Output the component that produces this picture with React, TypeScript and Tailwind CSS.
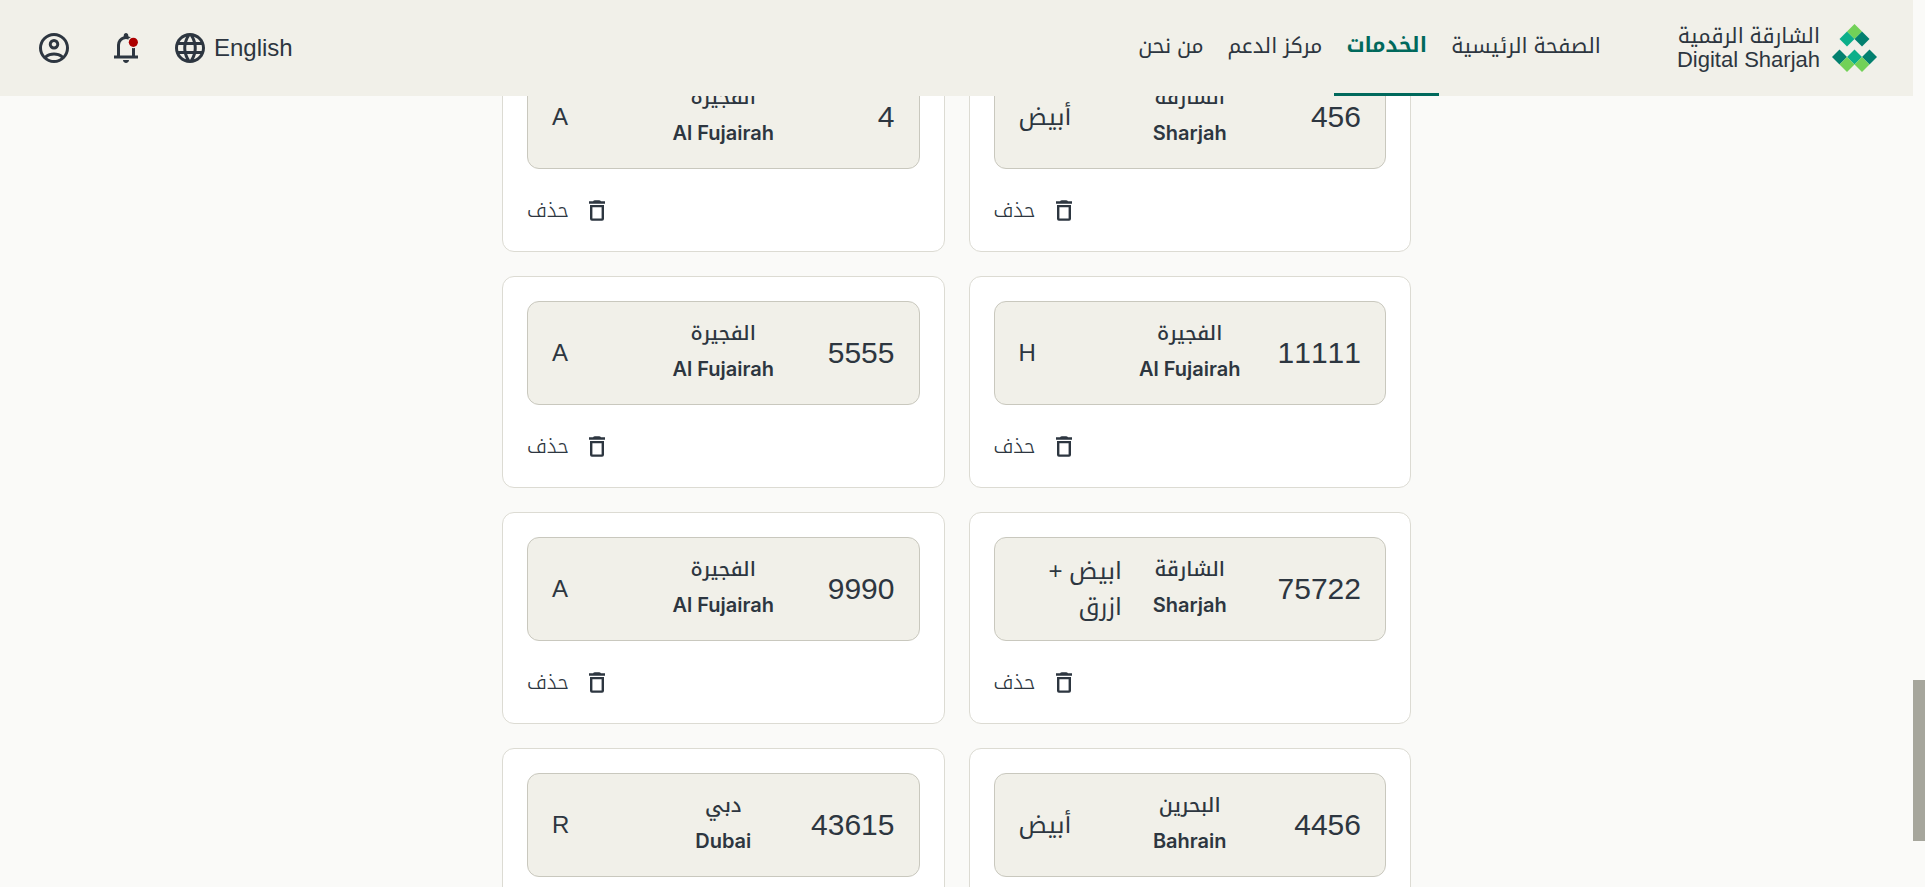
import type { ReactNode } from "react";

type Plate = {
  number: string;
  cityAr: string;
  cityEn: string;
  code: string;
};

const plates: Plate[] = [
  { number: "456", cityAr: "الشارقة", cityEn: "Sharjah", code: "أبيض" },
  { number: "4", cityAr: "الفجيرة", cityEn: "Al Fujairah", code: "A" },
  { number: "11111", cityAr: "الفجيرة", cityEn: "Al Fujairah", code: "H" },
  { number: "5555", cityAr: "الفجيرة", cityEn: "Al Fujairah", code: "A" },
  { number: "75722", cityAr: "الشارقة", cityEn: "Sharjah", code: "ابيض + ازرق" },
  { number: "9990", cityAr: "الفجيرة", cityEn: "Al Fujairah", code: "A" },
  { number: "4456", cityAr: "البحرين", cityEn: "Bahrain", code: "أبيض" },
  { number: "43615", cityAr: "دبي", cityEn: "Dubai", code: "R" },
];

const navItems = [
  { label: "الصفحة الرئيسية", active: false },
  { label: "الخدمات", active: true },
  { label: "مركز الدعم", active: false },
  { label: "من نحن", active: false },
];

function Icon({ className, children }: { className: string; children: ReactNode }) {
  return (
    <svg viewBox="0 -960 960 960" fill="currentColor" aria-hidden="true" className={className}>
      {children}
    </svg>
  );
}

function AccountIcon() {
  return (
    <Icon className="size-9">
      <path d="M234-276q51-39 114-61.5T480-360q69 0 132 22.5T726-276q35-41 54.5-93T800-480q0-133-93.5-226.5T480-800q-133 0-226.5 93.5T160-480q0 59 19.5 111t54.5 93Zm246-164q-59 0-99.5-40.5T340-580q0-59 40.5-99.5T480-720q59 0 99.5 40.5T620-580q0 59-40.5 99.5T480-440Zm0 360q-83 0-156-31.5T197-197q-54-54-85.5-127T80-480q0-83 31.5-156T197-763q54-54 127-85.5T480-880q83 0 156 31.5T763-763q54 54 85.5 127T880-480q0 83-31.5 156T763-197q-54 54-127 85.5T480-80Zm0-80q53 0 100-15.5t86-44.5q-39-29-86-44.5T480-280q-53 0-100 15.5T294-220q39 29 86 44.5T480-160Zm0-360q26 0 43-17t17-43q0-26-17-43t-43-17q-26 0-43 17t-17 43q0 26 17 43t43 17Z" />
    </Icon>
  );
}

function BellIcon() {
  return (
    <Icon className="size-9">
      <path d="M160-200v-80h80v-280q0-83 50-147.5T420-792v-28q0-25 17.5-42.5T480-880q25 0 42.5 17.5T540-820v28q80 20 130 84.5T720-560v280h80v80H160ZM480-80q-33 0-56.5-23.5T400-160h160q0 33-23.5 56.5T480-80ZM320-280h320v-280q0-66-47-113t-113-47q-66 0-113 47t-47 113v280Z" />
      <circle cx="676" cy="-632" r="156" fill="#f1f0e9" />
      <circle cx="676" cy="-632" r="122" fill="#ac0000" />
    </Icon>
  );
}

function GlobeIcon() {
  return (
    <svg viewBox="0 0 24 24" fill="currentColor" aria-hidden="true" className="size-9">
      <path d="M11.99 2C6.47 2 2 6.48 2 12s4.47 10 9.99 10C17.52 22 22 17.52 22 12S17.52 2 11.99 2zm6.93 6h-2.95c-.32-1.25-.78-2.45-1.38-3.56 1.84.63 3.37 1.91 4.33 3.56zM12 4.04c.83 1.2 1.48 2.53 1.91 3.96h-3.82c.43-1.43 1.08-2.76 1.91-3.96zM4.26 14C4.1 13.36 4 12.69 4 12s.1-1.36.26-2h3.38c-.08.66-.14 1.32-.14 2s.06 1.34.14 2H4.26zm.82 2h2.95c.32 1.25.78 2.45 1.38 3.56-1.84-.63-3.37-1.9-4.33-3.56zm2.95-8H5.08c.96-1.66 2.49-2.93 4.33-3.56C8.81 5.55 8.35 6.75 8.03 8zM12 19.96c-.83-1.2-1.48-2.53-1.91-3.96h3.82c-.43 1.43-1.08 2.76-1.91 3.96zM14.34 14H9.66c-.09-.66-.16-1.32-.16-2s.07-1.35.16-2h4.68c.09.65.16 1.32.16 2s-.07 1.34-.16 2zm.25 5.56c.6-1.11 1.06-2.31 1.38-3.56h2.95c-.96 1.65-2.49 2.93-4.33 3.56zM16.36 14c.08-.66.14-1.32.14-2s-.06-1.34-.14-2h3.38c.16.64.26 1.31.26 2s-.1 1.36-.26 2h-3.38z" />
    </svg>
  );
}

function TrashIcon() {
  return (
    <svg viewBox="0 0 16 21" fill="currentColor" aria-hidden="true" className="h-[21px] w-4">
      <path d="M4 1.2 Q4.6 0.2 6 0.2 H10 Q11.4 0.2 12 1.2 H16 V3.8 H0 V1.2 Z" />
      <path
        fillRule="evenodd"
        d="M1 5 H15 V18.8 Q15 20.7 13.1 20.7 H2.9 Q1 20.7 1 18.8 Z M3.4 7.2 V18.5 H12.6 V7.2 Z"
      />
    </svg>
  );
}

function LogoMark() {
  return (
    <svg viewBox="0 0 45 48" aria-hidden="true" className="h-12 w-[45px]">
      <path fill="#72d158" d="M22.5 0 30 7.5 22.5 15 15 7.5Z" />
      <path fill="#0caf8a" d="M15 7.5 22.5 15 15 22.5 7.5 15Z" />
      <path fill="#03806f" d="M30 7.5 37.5 15 30 22.5 22.5 15Z" />
      <path fill="#03806f" d="M7.5 25.5 15 33 7.5 40.5 0 33Z" />
      <path fill="#0caf8a" d="M22.5 25.5 30 33 22.5 40.5 15 33Z" />
      <path fill="#03806f" d="M37.5 25.5 45 33 37.5 40.5 30 33Z" />
      <path fill="#72d158" d="M15 33 22.5 40.5 15 48 7.5 40.5Z" />
      <path fill="#72d158" d="M30 33 37.5 40.5 30 48 22.5 40.5Z" />
    </svg>
  );
}

function Header() {
  return (
    <header className="z-10 flex h-24 shrink-0 items-center justify-between bg-[#f1f0e9] px-9">
      <div className="flex h-full items-center gap-16">
        <a href="#home" className="flex items-center gap-3">
          <LogoMark />
          <span className="flex flex-col leading-6">
            <span className="text-[21px]">الشارقة الرقمية</span>
            <span className="text-[22px]" dir="ltr">
              Digital Sharjah
            </span>
          </span>
        </a>
        <nav className="flex h-full text-[21px]">
          {navItems.map((item) => (
            <a
              key={item.label}
              href="#nav"
              aria-current={item.active ? "page" : undefined}
              className={
                item.active
                  ? "flex items-center border-b-3 border-[#00695c] px-3 pb-1 font-bold text-[#00695c]"
                  : "flex items-center px-3 pb-1"
              }
            >
              {item.label}
            </a>
          ))}
        </nav>
      </div>
      <div className="flex items-center gap-7">
        <button type="button" className="flex items-center gap-1.5 text-2xl" dir="ltr">
          <GlobeIcon />
          English
        </button>
        <div className="flex items-center gap-9">
          <button type="button" aria-label="الإشعارات">
            <BellIcon />
          </button>
          <button type="button" aria-label="الحساب">
            <AccountIcon />
          </button>
        </div>
      </div>
    </header>
  );
}

function PlateCard({ plate }: { plate: Plate }) {
  return (
    <li className="flex flex-col gap-6 rounded-xl border border-[#dcdbd3] bg-white p-6">
      <div className="grid h-26 grid-cols-3 items-center gap-4 rounded-xl border border-[#c9c8be] bg-[#f1f0e9] px-6">
        <span className="text-[30px] leading-9 [font-kerning:none]">{plate.number}</span>
        <div className="flex flex-col pb-1 text-center text-xl leading-9 whitespace-nowrap">
          <span className="font-medium">{plate.cityAr}</span>
          <span className="font-['Inter','Liberation_Sans',sans-serif] font-semibold">
            {plate.cityEn}
          </span>
        </div>
        <div className="flex justify-end text-2xl leading-9">
          <span>{plate.code}</span>
        </div>
      </div>
      <div className="flex justify-end">
        <button type="button" className="flex h-[34px] items-center gap-5 text-xl font-light">
          <TrashIcon />
          حذف
        </button>
      </div>
    </li>
  );
}

export default function App() {
  return (
    <div
      dir="rtl"
      lang="ar"
      className="flex h-screen overflow-hidden bg-[#fafaf8] font-['Liberation_Sans','Noto_Kufi_Arabic','DejaVu_Sans',sans-serif] text-[#2d3640]"
    >
      <div className="flex w-3 shrink-0 flex-col" aria-hidden="true">
        <div className="grow-[680]" />
        <div className="grow-[161] bg-[#a6a69c]" />
        <div className="grow-[46]" />
      </div>
      <div className="flex min-w-0 flex-1 flex-col">
        <Header />
        <main className="min-h-0 flex-1 overflow-hidden">
          <ul className="mx-auto -mt-14 grid max-w-[909px] grid-cols-2 gap-6">
            {plates.map((plate) => (
              <PlateCard key={plate.number} plate={plate} />
            ))}
          </ul>
        </main>
      </div>
    </div>
  );
}
